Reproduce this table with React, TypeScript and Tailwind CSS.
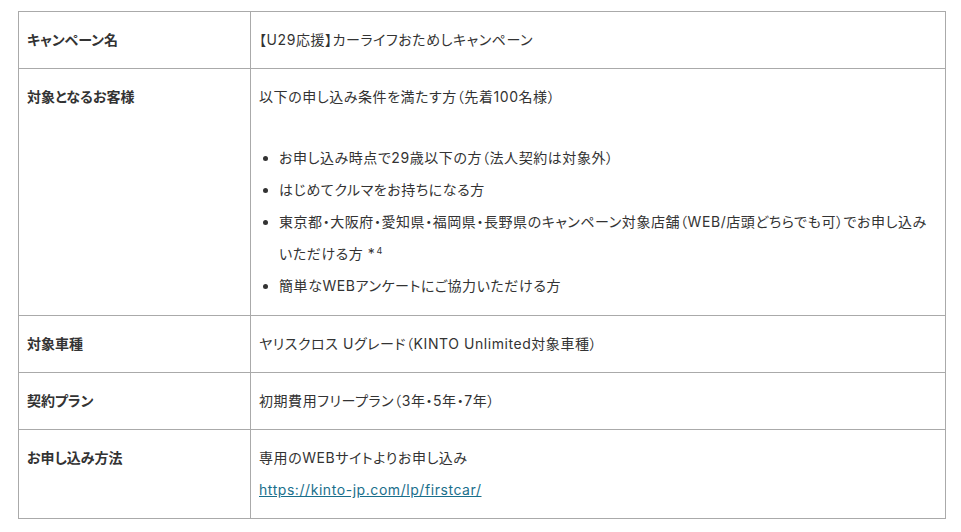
const rows = [
	{ head: "キャンペーン名", body: <p>【U29応援】カーライフおためしキャンペーン</p> },
	{
		head: "対象となるお客様",
		body: (
			<>
				<p>以下の申し込み条件を満たす方（先着100名様）</p>
				<ul className="mt-[29px] mb-px list-disc pl-5">
					<li>お申し込み時点で29歳以下の方（法人契約は対象外）</li>
					<li>はじめてクルマをお持ちになる方</li>
					<li>
						東京都・大阪府・愛知県・福岡県・長野県のキャンペーン対象店舗（WEB/店頭どちらでも可）でお申し込みいただける方 *
						<span className="ml-px align-[5px] text-[9px] leading-none">4</span>
					</li>
					<li>簡単なWEBアンケートにご協力いただける方</li>
				</ul>
			</>
		),
	},
	{ head: "対象車種", body: <p>ヤリスクロス Uグレード（KINTO Unlimited対象車種）</p> },
	{ head: "契約プラン", body: <p>初期費用フリープラン（3年・5年・7年）</p> },
	{
		head: "お申し込み方法",
		body: (
			<>
				<p>専用のWEBサイトよりお申し込み</p>
				<a href="#" className="text-[#1a6f8c] underline">
					https://kinto-jp.com/lp/firstcar/
				</a>
			</>
		),
	},
]

export default function App() {
	return (
		<div className="w-[961px] h-[532px] bg-white pt-[11px] pl-[18px] text-[#333] text-[14px] leading-[32px] tracking-[0.04em] [font-feature-settings:'palt'] font-['Inter','Noto_Sans_CJK_JP',sans-serif]">
			<table className="w-[928px] border-collapse border border-[#aaa] table-fixed">
				<tbody>
					{rows.map((r) => (
						<tr key={r.head}>
							<th className="w-[232px] border border-[#aaa] px-2 py-3 text-left align-top font-bold tracking-normal">
								{r.head}
							</th>
							<td className="border border-[#aaa] px-2 py-3 align-top">{r.body}</td>
						</tr>
					))}
				</tbody>
			</table>
		</div>
	)
}
